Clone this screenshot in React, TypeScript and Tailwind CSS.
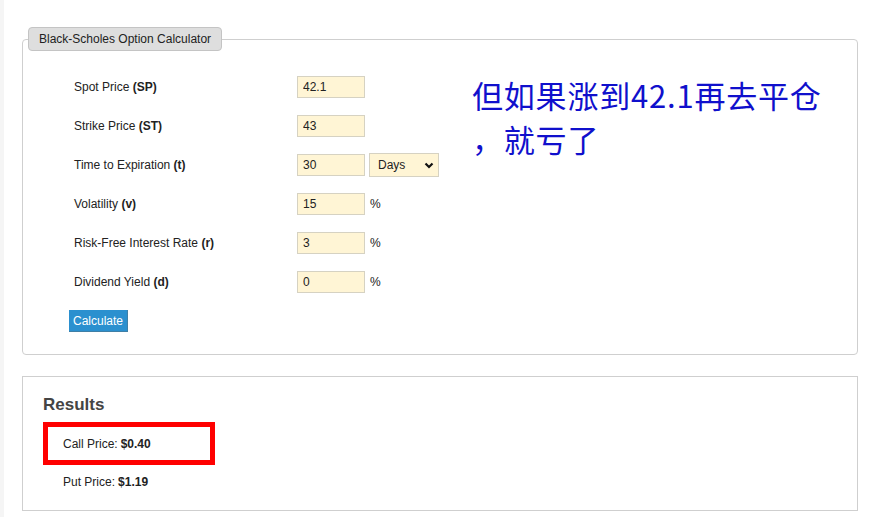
import React from 'react'

const rows = [
  { label: 'Spot Price', sym: 'SP', value: '42.1' },
  { label: 'Strike Price', sym: 'ST', value: '43' },
  { label: 'Time to Expiration', sym: 't', value: '30', unit: 'select' },
  { label: 'Volatility', sym: 'v', value: '15', unit: '%' },
  { label: 'Risk-Free Interest Rate', sym: 'r', value: '3', unit: '%' },
  { label: 'Dividend Yield', sym: 'd', value: '0', unit: '%' },
]

function Chevron() {
  return (
    <svg width="10" height="7" viewBox="0 0 10 7" className="pointer-events-none absolute right-[5px] top-[9px]">
      <path d="M1.5 1.5 L5 5 L8.5 1.5" fill="none" stroke="#111" strokeWidth="2.2" />
    </svg>
  )
}

export default function App() {
  return (
    <div className="flex min-h-[517px] bg-white font-['Liberation_Sans',Arial,sans-serif] text-[12px] text-[#222]">
      <div className="w-[4px] shrink-0 bg-[#f5f5f5]" />
      <div className="ml-[18px] w-[836px] pt-[27px]">
        <fieldset className="m-0 rounded-[4px] border border-[#cfcfcf] px-0 pb-[22px]">
          <legend className="ml-[5px] h-[24px] rounded-[4px] border border-[#c4c4c4] bg-[#dedede] px-[10px] leading-[22px] text-[#222]">
            Black-Scholes Option Calculator
          </legend>
          <div className="flex pt-[25px]">
            <div className="flex w-[449px] flex-col gap-[17px] pl-[46px]">
              {rows.map((r) => (
                <div key={r.sym} className="flex h-[22px] items-center">
                  <div className="ml-[5px] w-[223px]">
                    {r.label} <b>({r.sym})</b>
                  </div>
                  <input
                    readOnly
                    value={r.value}
                    className="h-[22px] w-[68px] border border-[#d6d2c2] bg-[#fff5d5] px-[5px] text-[12px] text-[#222] outline-none"
                  />
                  {r.unit === '%' && <span className="ml-[5px]">%</span>}
                  {r.unit === 'select' && (
                    <div className="relative ml-[4px]">
                      <select className="h-[24px] w-[70px] appearance-none border border-[#d6d2c2] bg-[#fff5d5] pl-[8px] text-[12px] text-[#222] outline-none">
                        <option>Days</option>
                      </select>
                      <Chevron />
                    </div>
                  )}
                </div>
              ))}
              <div>
                <button className="h-[22px] border-r border-b border-[#3f7fa6] bg-[#2b90cf] px-[4px] text-[12px] text-white">
                  Calculate
                </button>
              </div>
            </div>
            <div className="-mt-[3px] font-['Noto_Sans_CJK_SC',sans-serif] text-[31px] leading-[44px] tracking-[0.8px] text-[#1010cc]">
              但如果涨到42.1再去平仓
              <br />
              ，就亏了
            </div>
          </div>
        </fieldset>
        <div className="mt-[21px] border border-[#cfcfcf] pt-[18px] pb-[20px] pl-[20px]">
          <div className="h-[20px] text-[17px] leading-[20px] font-bold text-[#444]">Results</div>
          <div className="mt-[7px] flex h-[43px] w-[172px] items-center border-[5px] border-[#ff0000] pl-[15px]">
            Call Price: <b className="ml-[3px]">$0.40</b>
          </div>
          <div className="mt-[9px] flex h-[16px] items-center pl-[20px]">
            Put Price: <b className="ml-[3px]">$1.19</b>
          </div>
        </div>
      </div>
    </div>
  )
}
